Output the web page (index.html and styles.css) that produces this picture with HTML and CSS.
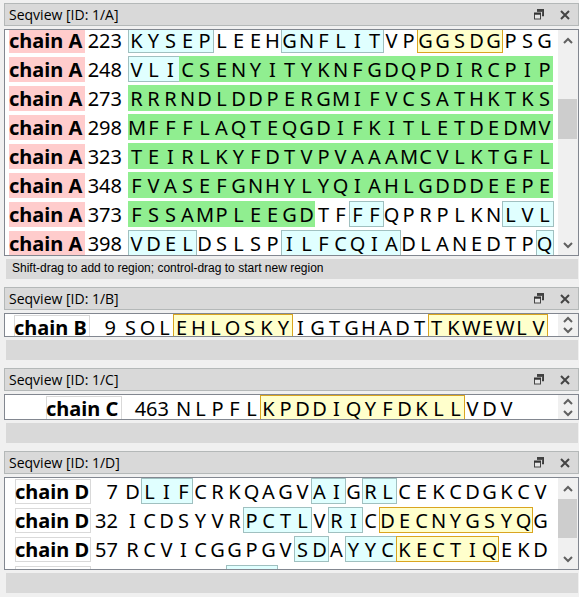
FILE: index.html
```html
<!DOCTYPE html>
<html lang="en">
<head>
<meta charset="utf-8">
<title>Seqview</title>
<link rel="stylesheet" href="styles.css">
</head>
<body>
<svg class="symbols" aria-hidden="true">
  <symbol id="float" viewBox="0 0 10 11">
    <path d="M3 0H10V7H8V3H3Z" fill="#555"/>
    <path d="M3 1H10M9.500 1V6.500H8" fill="none" stroke="#3c3c3c" stroke-width="1.500"/>
    <rect x="0.500" y="5" width="6" height="5" fill="#e6e6e6" stroke="#444"/>
    <path d="M0 4.500H7" stroke="#333" stroke-width="2"/>
  </symbol>
  <symbol id="close" viewBox="0 0 10 10">
    <path d="M1 1L9 9M9 1L1 9" stroke="#444" stroke-width="2"/>
  </symbol>
  <symbol id="up" viewBox="0 0 10 7">
    <path d="M1 6L5 2L9 6" fill="none" stroke="#606060" stroke-width="2"/>
  </symbol>
  <symbol id="down" viewBox="0 0 10 7">
    <path d="M1 1L5 5L9 1" fill="none" stroke="#606060" stroke-width="2"/>
  </symbol>
</svg>
<main class="docks" id="docks"></main>
<template id="dock-template">
  <section class="dock">
    <header class="titlebar">
      <h2 class="title"></h2>
      <button class="tool" type="button" aria-label="Float"><svg class="icon-float"><use href="#float"/></svg></button>
      <button class="tool" type="button" aria-label="Close"><svg class="icon-close"><use href="#close"/></svg></button>
    </header>
    <div class="view">
      <div class="rows"></div>
      <div class="scrollbar">
        <button class="arrow" type="button" aria-label="Scroll up"><svg class="chevron"><use href="#up"/></svg></button>
        <div class="track"><div class="before"></div><div class="thumb"></div><div class="after"></div></div>
        <button class="arrow" type="button" aria-label="Scroll down"><svg class="chevron"><use href="#down"/></svg></button>
      </div>
    </div>
    <footer class="status"></footer>
  </section>
</template>
<script src="script.js"></script>
</body>
</html>
```
FILE: script.js
```js
// Segment prefixes: h = helix, s = strand, g = selected region, - = plain.
const docks = [
  { chain: "A", status: "Shift-drag to add to region; control-drag to start new region", rows: [
    [223, "h:KYSEP -:LEEH h:GNFLIT -:VP s:GGSDG -:PSG"],
    [248, "h:VLI g:CSENYITYKNFGDQPDIRCPIP"],
    [273, "g:RRRNDLDDPERGMIFVCSATHKTKS"],
    [298, "g:MFFFLAQTEQGDIFKITLETDEDMV"],
    [323, "g:TEIRLKYFDTVPVAAAMCVLKTGFL"],
    [348, "g:FVASEFGNHYLYQIAHLGDDDEEPE"],
    [373, "g:FSSAMPLEEGD -:TF h:FF -:QPRPLKN h:LVL"],
    [398, "h:VDEL -:DSLSP h:ILFCQIA -:DLANEDTP h:Q"]
  ]},
  { chain: "B", status: "", rows: [
    [9, "-:SOL s:EHLOSKY -:IGTGHADT s:TKWEWLV"]
  ]},
  { chain: "C", status: "", rows: [
    [463, "-:NLPFL s:KPDDIQYFDKLL -:VDV"]
  ]},
  { chain: "D", status: "", rows: [
    [7, "-:D h:LIF -:CRKQAGV h:AI -:G h:RL -:CEKCDGKCV"],
    [32, "-:ICDSYVR h:PCTL -:V h:RI -:C s:DECNYGSYQ -:G"],
    [57, "-:RCVICGGPGV h:SD -:A h:YYC s:KECTIQ -:EKD"],
    ["", "-:...... h:..."]
  ]}
];

const kinds = { h: "helix", s: "strand", g: "selected", "-": "plain" };

function element(tag, className, text) {
  const node = document.createElement(tag);
  node.className = className;
  if (text !== undefined) node.textContent = text;
  return node;
}

function buildRow(chain, [number, sequence]) {
  const row = element("div", "row");
  // A row without a number lies below the visible part of the view.
  row.append(element("span", "label", number === "" ? "" : "chain " + chain));
  row.append(element("span", "number", number));
  for (const part of sequence.split(" ")) {
    const segment = element("span", "segment " + kinds[part[0]]);
    for (const residue of part.slice(2)) {
      segment.append(element("span", "residue", residue === "." ? "" : residue));
    }
    row.append(segment);
  }
  return row;
}

for (const { chain, status, rows } of docks) {
  const copy = document.getElementById("dock-template").content.cloneNode(true);
  copy.querySelector(".dock").classList.add("chain-" + chain.toLowerCase());
  copy.querySelector(".title").textContent = "Seqview [ID: 1/" + chain + "]";
  copy.querySelector(".status").textContent = status;
  copy.querySelector(".rows").append(...rows.map(row => buildRow(chain, row)));
  document.getElementById("docks").append(copy);
}
```
FILE: styles.css
```css
* { box-sizing: border-box; }

body {
  margin: 0;
  background: #f0f0f0;
  color: #000;
  font-family: "Open Sans", sans-serif;
}

.symbols { display: none; }

.docks {
  display: flex;
  flex-direction: column;
  gap: 8px;
  padding: 3px 0 4px 4px;
}

.dock {
  display: flex;
  flex-direction: column;
  gap: 3px;
}

.titlebar {
  display: flex;
  align-items: center;
  gap: 8px;
  height: 23px;
  padding: 0 4px;
  background: #d9d9d9;
  border: 1px solid #b4b8b8;
}

.title {
  flex: 1;
  margin: 0;
  font-size: 14px;
  font-weight: 400;
  line-height: 21px;
}

.tool, .arrow {
  display: flex;
  align-items: center;
  justify-content: center;
  padding: 0;
  border: 0;
  background: none;
}

.tool { width: 18px; height: 18px; }
.icon-float { width: 10px; height: 11px; }
.icon-close { width: 10px; height: 10px; }

.view {
  display: flex;
  height: 24px;
  background: #fff;
  border: 1px solid #828790;
  overflow: hidden;
}

.rows {
  flex: 1;
  min-width: 0;
  display: flex;
  flex-direction: column;
  gap: 3px;
}

.row {
  display: flex;
  flex: none;
  height: 26px;
  padding-left: var(--indent);
  font-family: "Noto Sans", sans-serif;
  font-size: 20px;
  line-height: 28px;
}

.label {
  flex: none;
  width: 76px;
  height: 25px;
  margin-top: 1px;
  box-shadow: inset 0 0 0 1px #d9d9d9;
  font-weight: 700;
  line-height: 26px;
  white-space: nowrap;
}

.number {
  flex: none;
  width: var(--number);
  padding-right: 6px;
  text-align: right;
}

.segment {
  display: flex;
  flex: none;
  height: 26px;
}

.residue {
  width: 17px;
  text-align: center;
}

.helix, .strand {
  margin-right: -1px;
  padding-right: 1px;
}

.helix { background: #e0ffff; box-shadow: inset 0 0 0 1px #a0c0c0; }
.strand { background: #ffffcc; box-shadow: inset 0 0 0 1px #daa520; }
.selected { background: #90ee90; }

.scrollbar {
  flex: none;
  display: flex;
  flex-direction: column;
  width: 20px;
  padding-right: 1px;
  background: #f0f0f0;
}

.arrow { flex: 0 1 20px; min-height: 0; }
.chevron { flex: none; width: 10px; height: 7px; }

.track {
  flex: 1;
  display: flex;
  flex-direction: column;
}

.thumb { background: #cdcdcd; }

.status {
  height: 20px;
  margin: 0 1px 0 2px;
  padding-left: 6px;
  background: #d9d9d9;
  font: 12px/18px "Liberation Sans", sans-serif;
}

.chain-a { --indent: 4px; --number: 43px; }
.chain-a .view { height: 227px; }
.chain-a .rows { margin-top: -3px; }
.chain-a .label { background: #ffcccc; box-shadow: none; }
.chain-a .before { flex: 49; }
.chain-a .thumb { flex: 40; }
.chain-a .after { flex: 96; }

.chain-b { --indent: 9px; --number: 32px; }

.chain-c { --indent: 41px; --number: 53px; }
.chain-c .view { height: 26px; }

.chain-d { --indent: 10px; --number: 33px; }
.chain-d .view { height: 93px; }
.chain-d .before { flex: 1; }
.chain-d .thumb { flex: 39; }
.chain-d .after { flex: 11; }
```
